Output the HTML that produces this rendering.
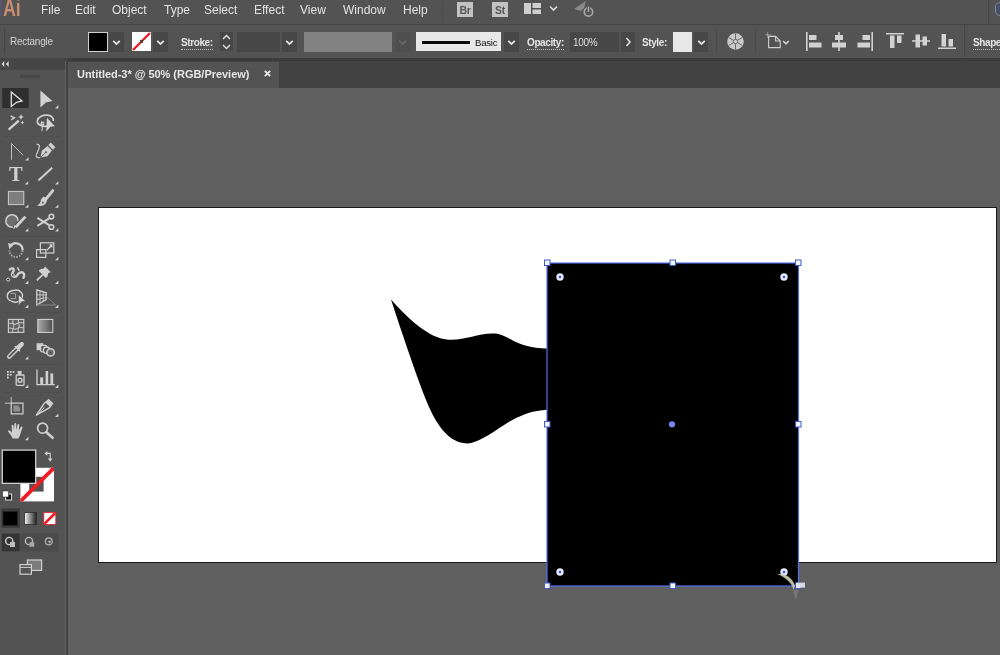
<!DOCTYPE html>
<html><head><meta charset="utf-8"><title>Adobe Illustrator</title>
<style>
html,body{margin:0;padding:0;}
body{width:1000px;height:655px;overflow:hidden;background:#5f5f5f;position:relative;font-family:"Liberation Sans",sans-serif;color:#d6d6d6;}
.abs{position:absolute;}
.gt,#menubar>div,#ctrl>div,svg{will-change:transform;}
#menubar{left:0;top:0;width:1000px;height:24px;background:#535353;}
#menubar .mi{position:absolute;top:1.5px;font-size:12px;line-height:16px;color:#e2e2e2;white-space:nowrap;}
#sep1{left:0;top:24px;width:1000px;height:1px;background:#454545;}
#ctrl{left:0;top:25px;width:1000px;height:33px;background:#535353;}
#ctrl .lbl{position:absolute;font-size:10px;line-height:12px;color:#e4e4e4;white-space:nowrap;font-weight:bold;letter-spacing:-0.4px;}
#ctrl .ul{border-bottom:1px dotted #bdbdbd;}
#ctrl .dk{position:absolute;background:#474747;}
#sep2{left:0;top:58px;width:1000px;height:3px;background:#3c3c3c;}
#tabstrip{left:67px;top:61px;width:933px;height:26.5px;background:#424242;}
#tab{left:68px;top:61.5px;width:211px;height:26px;background:#535353;}
#tabtxt{left:77px;top:67px;font-size:11px;font-weight:bold;color:#e6e6e6;white-space:nowrap;line-height:14px;letter-spacing:-0.03px;}
#tools{left:0;top:58px;width:65px;height:597px;background:#535353;}
#toolsedge{left:65.5px;top:58px;width:2px;height:597px;background:#434343;}
#toolstop{left:0;top:58px;width:65px;height:12px;background:#464646;}
#canvas{left:67px;top:87px;width:933px;height:567px;background:#5f5f5f;}
#artboard{left:98px;top:207px;width:897px;height:354px;background:#fff;border:1px solid #1a1a1a;box-sizing:content-box;}
svg{position:absolute;overflow:visible;}
</style></head><body>
<div id="canvas" class="abs"></div>
<div id="artboard" class="abs"></div>
<svg class="abs" style="left:0;top:0" width="1000" height="655" viewBox="0 0 1000 655">
<path d="M391,299.5 C410,321 430,338 447,339.5 C465,341 478,332.5 495,333.5 C509,334.5 515,348 547,348.5 L547,409.7 C520,411 502,427 491,433.5 C481,439.5 473,443.5 467,443.4 C449,443 437,425 429,407 C419,384 401,330 391,299.5 Z" fill="#000"/>
<rect x="547" y="263" width="251.5" height="323" fill="#000"/>
<rect x="547" y="263" width="251.5" height="323" fill="none" stroke="#5570f0" stroke-width="1.2"/>
<g fill="#f4f6ff" stroke="#4058c8" stroke-width="1">
<rect x="544.5" y="260" width="5.5" height="5.5"/><rect x="670" y="260" width="5.5" height="5.5"/><rect x="795.5" y="260" width="5.5" height="5.5"/>
<rect x="544.5" y="421.5" width="5.5" height="5.5"/><rect x="795.5" y="421.5" width="5.5" height="5.5"/>
<rect x="544.5" y="583" width="5.5" height="5.5"/><rect x="670" y="583" width="5.5" height="5.5"/><rect x="795.5" y="583" width="5.5" height="5.5"/>
</g>
<circle cx="672" cy="424.3" r="3.1" fill="#7486ee"/>
<g fill="#3a55cc" stroke="#e4e9ff" stroke-width="2.4">
<circle cx="560" cy="277" r="2.5"/><circle cx="784" cy="277" r="2.5"/><circle cx="560" cy="572" r="2.5"/><circle cx="784" cy="572" r="2.5"/>
</g>
<path d="M777.5,574.2 C785,573.4 792,577 795,585.6 L793.6,590 C792.4,583.5 786,577.4 777.5,574.2 Z" fill="#c6caaf" opacity="0.92"/>
<path d="M793,590 L795.6,600 L798.6,590 Z" fill="#808080" opacity="0.7"/>
<rect x="796" y="582.6" width="9" height="5" fill="#e2e2ec" opacity="0.92"/>
</svg>
<div id="menubar" class="abs">
<div class="abs" style="left:3px;top:-4.3px;font-size:24px;font-weight:bold;line-height:24px;color:#c78d72;transform:scaleX(0.74);transform-origin:0 0;">Ai</div><div class="abs" style="left:0;top:0;width:1.5px;height:16px;background:#585670"></div>
<div class="mi" style="left:40.5px">File</div>
<div class="mi" style="left:74.5px">Edit</div>
<div class="mi" style="left:112px">Object</div>
<div class="mi" style="left:164px">Type</div>
<div class="mi" style="left:204px">Select</div>
<div class="mi" style="left:253.5px">Effect</div>
<div class="mi" style="left:299.5px">View</div>
<div class="mi" style="left:343px">Window</div>
<div class="mi" style="left:402.5px">Help</div>
<div class="abs" style="left:442px;top:1px;width:1px;height:22px;background:#4b4b4b"></div>
<div class="abs" style="left:457px;top:2px;width:16px;height:15px;background:#c2c2c2;color:#585858;font-size:10.5px;font-weight:bold;line-height:16px;text-align:center;letter-spacing:-0.3px;">Br</div>
<div class="abs" style="left:492px;top:2px;width:16px;height:15px;background:#c2c2c2;color:#585858;font-size:10.5px;font-weight:bold;line-height:16px;text-align:center;letter-spacing:-0.3px;">St</div>
<svg style="left:524px;top:3px" width="17" height="11" viewBox="0 0 17 11"><g fill="#cfcfcf"><rect x="0" y="0" width="7" height="11"/><rect x="8.5" y="0" width="8.5" height="5"/><rect x="8.5" y="6.5" width="8.5" height="4.5"/></g></svg>
<svg style="left:549px;top:5px" width="9" height="7" viewBox="0 0 9 7"><path d="M1,1.5 L4.5,5 L8,1.5" fill="none" stroke="#d8d8d8" stroke-width="1.6"/></svg>
<svg style="left:573px;top:0px" width="22" height="20" viewBox="0 0 22 20"><path d="M1,9 L13,1 L11,8 L8,11 Z" fill="#8a8a8a"/><circle cx="15.5" cy="12" r="4.2" fill="none" stroke="#a8a8a8" stroke-width="1.7"/><path d="M15.5,6 V12" stroke="#535353" stroke-width="3.4"/><path d="M15.5,6.5 V12" stroke="#a8a8a8" stroke-width="1.6"/></svg>
<div class="abs" style="left:988px;top:0px;width:1px;height:24px;background:#484848"></div>
<div class="abs" style="left:995px;top:2px;width:8px;height:12px;border-radius:5px 0 0 5px;background:#44506a;border:1px solid #7b8a86;"></div>

</div>
<div id="sep1" class="abs"></div>
<div id="ctrl" class="abs">
<div class="abs" style="left:4px;top:3px;width:1px;height:26px;background:#484848"></div>
<div class="lbl" style="left:10px;top:10.5px;font-weight:normal;color:#d2d2d2;letter-spacing:-0.25px">Rectangle</div>
<div class="abs" style="left:88px;top:7px;width:17.6px;height:17.6px;background:#000;border:1.2px solid #d0d0d0;box-sizing:content-box"></div>
<div class="dk" style="left:109px;top:7px;width:15px;height:20px"></div>
<svg style="left:112px;top:14px" width="9" height="7" viewBox="0 0 9 7"><path d="M1.2,1.8 L4.5,4.9 L7.8,1.8" fill="none" stroke="#e0e0e0" stroke-width="1.8"/></svg>
<div class="abs" style="left:132px;top:7px;width:19px;height:19px;background:#fff;"></div>
<svg style="left:132px;top:7px" width="19" height="19" viewBox="0 0 19 19"><path d="M1,18 L18,1" stroke="#ee1218" stroke-width="2.1"/><rect x="8" y="8" width="3" height="3" fill="#4a4a32"/></svg>
<div class="dk" style="left:153px;top:7px;width:15px;height:20px"></div>
<svg style="left:156px;top:14px" width="9" height="7" viewBox="0 0 9 7"><path d="M1.2,1.8 L4.5,4.9 L7.8,1.8" fill="none" stroke="#e0e0e0" stroke-width="1.8"/></svg>
<div class="lbl ul" style="left:181px;top:12px;">Stroke:</div>
<div class="dk" style="left:220px;top:7px;width:13px;height:19px"></div>
<svg style="left:222px;top:9px" width="9" height="16" viewBox="0 0 9 16"><path d="M1,5 L4.5,1.5 L8,5 M1,11 L4.5,14.5 L8,11" fill="none" stroke="#dcdcdc" stroke-width="1.5"/></svg>
<div class="dk" style="left:237px;top:7px;width:43px;height:20px"></div>
<div class="dk" style="left:282px;top:7px;width:15px;height:20px"></div>
<svg style="left:285px;top:14px" width="9" height="7" viewBox="0 0 9 7"><path d="M1.2,1.8 L4.5,4.9 L7.8,1.8" fill="none" stroke="#e0e0e0" stroke-width="1.8"/></svg>
<div class="abs" style="left:303.6px;top:6.8px;width:88.4px;height:20.2px;background:#818181"></div>
<div class="abs" style="left:395px;top:7px;width:15px;height:20px;background:#4f4f4f"></div>
<svg style="left:398px;top:14px" width="9" height="7" viewBox="0 0 9 7"><path d="M1,1.5 L4.5,5 L8,1.5" fill="none" stroke="#6a6a6a" stroke-width="1.6"/></svg>
<div class="abs" style="left:416.3px;top:6.8px;width:85.2px;height:19.4px;background:#e8e8e8"></div>
<div class="abs" style="left:422px;top:16px;width:48px;height:2.5px;background:#0a0a0a"></div>
<div class="abs" style="left:474.7px;top:12.3px;font-size:9.6px;line-height:12px;color:#111;letter-spacing:-0.25px">Basic</div>
<div class="dk" style="left:504px;top:7px;width:15px;height:20px"></div>
<svg style="left:507px;top:14px" width="9" height="7" viewBox="0 0 9 7"><path d="M1.2,1.8 L4.5,4.9 L7.8,1.8" fill="none" stroke="#e0e0e0" stroke-width="1.8"/></svg>
<div class="lbl ul" style="left:527px;top:12px;">Opacity:</div>
<div class="dk" style="left:569.5px;top:7px;width:48.5px;height:20px"></div>
<div class="abs" style="left:573px;top:11.5px;font-size:10px;line-height:12px;color:#dcdcdc;letter-spacing:-0.3px">100%</div>
<div class="dk" style="left:621px;top:7px;width:14px;height:20px"></div>
<svg style="left:625px;top:12px" width="7" height="10" viewBox="0 0 7 10"><path d="M1.5,1 L5,5 L1.5,9" fill="none" stroke="#e0e0e0" stroke-width="1.6"/></svg>
<div class="lbl" style="left:642px;top:12px;">Style:</div>
<div class="abs" style="left:673px;top:7px;width:19px;height:19.5px;background:#e8e8e8"></div>
<div class="dk" style="left:694px;top:7px;width:14px;height:20px"></div>
<svg style="left:696.5px;top:14px" width="9" height="7" viewBox="0 0 9 7"><path d="M1.2,1.8 L4.5,4.9 L7.8,1.8" fill="none" stroke="#e0e0e0" stroke-width="1.8"/></svg>
<div class="abs" style="left:716px;top:4px;width:1px;height:25px;background:#4a4a4a"></div>
<div class="abs" style="left:755px;top:4px;width:1px;height:25px;background:#4a4a4a"></div>
<div class="abs" style="left:964px;top:0px;width:1px;height:32px;background:#484848"></div>
<div class="lbl ul" style="left:973px;top:12px;">Shape:</div>

<svg style="left:726px;top:7px" width="19" height="19" viewBox="0 0 19 19"><circle cx="9.5" cy="9.5" r="8.3" fill="#c9c9c9"/><g stroke="#6a6a6a" stroke-width="1" fill="none"><circle cx="9.5" cy="9.5" r="2.2"/><path d="M9.5,1.5 V7.3 M9.5,11.7 V17.5 M2.6,5.5 L7.6,8.4 M11.4,10.6 L16.4,13.5 M2.6,13.5 L7.6,10.6 M11.4,8.4 L16.4,5.5"/></g></svg>
<svg style="left:765px;top:6px" width="26" height="22" viewBox="0 0 26 22"><g fill="none" stroke="#cfcfcf" stroke-width="1.1"><path d="M3.6,5.4 H10.6 L15.2,10 V16.6 H3.6 Z"/><path d="M10.6,5.4 V10 H15.2"/></g><path d="M0.6,3.8 H5.6 M2.6,1.6 V6.4" stroke="#cfcfcf" stroke-width="1" stroke-dasharray="1 1"/><path d="M18.2,10 L21,12.8 L23.8,10" fill="none" stroke="#d8d8d8" stroke-width="1.5"/></svg>
<svg style="left:806px;top:7px" width="16" height="19" viewBox="0 0 16 19"><g fill="#d2d2d2"><rect x="0" y="0" width="1.6" height="19"/><rect x="3" y="3" width="7.5" height="5"/><rect x="3" y="10.5" width="12.5" height="5"/></g></svg>
<svg style="left:831px;top:7px" width="16" height="19" viewBox="0 0 16 19"><g fill="#d2d2d2"><rect x="7.2" y="0" width="1.6" height="19"/><rect x="4" y="3" width="8" height="5"/><rect x="1" y="10.5" width="14" height="5"/></g></svg>
<svg style="left:857px;top:7px" width="16" height="19" viewBox="0 0 16 19"><g fill="#d2d2d2"><rect x="14.4" y="0" width="1.6" height="19"/><rect x="5.5" y="3" width="7.5" height="5"/><rect x="0.5" y="10.5" width="12.5" height="5"/></g></svg>
<svg style="left:886px;top:8px" width="18" height="16" viewBox="0 0 18 16"><g fill="#d2d2d2"><rect x="0" y="0" width="18" height="1.5"/><rect x="4" y="2.5" width="4.5" height="12.5"/><rect x="11" y="2.5" width="4.5" height="7.5"/></g></svg>
<svg style="left:912px;top:8px" width="18" height="16" viewBox="0 0 18 16"><g fill="#d2d2d2"><rect x="0" y="7.2" width="18" height="1.5"/><rect x="3.5" y="1.5" width="4.5" height="13"/><rect x="10.5" y="3.5" width="4.5" height="9"/></g></svg>
<svg style="left:938px;top:8px" width="18" height="16" viewBox="0 0 18 16"><g fill="#d2d2d2"><rect x="0" y="14.5" width="18" height="1.5"/><rect x="3.5" y="1" width="4.5" height="12.5"/><rect x="10.5" y="6" width="4.5" height="7.5"/></g></svg>

</div>
<div id="sep2" class="abs"></div>
<div id="tabstrip" class="abs"></div>
<div id="tab" class="abs"></div>
<div id="tabtxt" class="abs gt">Untitled-3* @ 50% (RGB/Preview)</div>
<svg class="abs" style="left:264.3px;top:69.5px" width="7" height="7" viewBox="0 0 7 7"><path d="M0.8,0.8 L6.2,6.2 M6.2,0.8 L0.8,6.2" stroke="#ececec" stroke-width="1.8"/></svg>
<div id="tools" class="abs"></div>
<div id="toolstop" class="abs"></div>
<div id="toolsedge" class="abs"></div>
<svg class="abs" style="left:0;top:0" width="70" height="655" viewBox="0 0 70 655">
<!-- top collapse arrows & grip -->
<path d="M4.2,61 L1.5,64 L4.2,67 Z M8.6,61 L5.9,64 L8.6,67 Z" fill="#d8d8d8"/>
<rect x="20" y="74.5" width="20" height="3.5" fill="#484848"/>
<!-- group separators -->
<g fill="#4e4e4e"><rect x="3" y="136" width="58" height="1"/><rect x="3" y="236" width="58" height="1"/><rect x="3" y="312" width="58" height="1"/><rect x="3" y="364" width="58" height="1"/><rect x="3" y="392" width="58" height="1"/></g>
<!-- row1 -->
<rect x="2.2" y="88" width="26.5" height="20" rx="1" fill="#2f2f2f"/>
<path d="M11.3,92 L22,101 L16.6,102.3 L11.3,106.4 Z" fill="none" stroke="#e0e0e0" stroke-width="1.3" stroke-linejoin="miter"/>
<path d="M40.4,90.4 L52.4,101 L45.9,102.6 L40.4,107.6 Z" fill="#d0d0d0"/>
<path d="M58.4,105.0 V108.4 H55.0 Z" fill="#cfcfcf"/>
<!-- row2 magic wand -->
<path d="M8.6,129.6 L18.8,120.6" stroke="#d0d0d0" stroke-width="2.3" stroke-linecap="butt"/>
<path d="M21,114.3 L22,116.2 L23.9,117 L22,117.8 L21,119.7 L20,117.8 L18.1,117 L20,116.2 Z" fill="#d0d0d0"/>
<path d="M22.4,120.6 L23,122 L24.4,122.6 L23,123.2 L22.4,124.6 L21.8,123.2 L20.4,122.6 L21.8,122 Z" fill="#d0d0d0"/>
<path d="M10.6,115.8 L14.4,117.8 L11.2,120" fill="none" stroke="#d0d0d0" stroke-width="1.5"/>
<!-- lasso -->
<path d="M47,126.2 C40,126.8 36.8,123.5 37.4,120.6 C38.2,116.6 43.5,115 47,115.2 C51.5,115.4 54,118 53.2,121" fill="none" stroke="#d0d0d0" stroke-width="1.7"/>
<path d="M41.5,122.2 C43.8,121.6 44.6,124 43,125 C41.6,125.8 40.4,124.6 41.5,122.2 C42.6,126 42.6,129 41.8,131" fill="none" stroke="#d0d0d0" stroke-width="1.1"/>
<path d="M46.9,117.8 L55,126.2 L50.3,126.8 L46.3,131.4 Z" fill="#d6d6d6"/>
<!-- row3 thin anchor outline -->
<path d="M11.5,159.8 V143.6 L23,155.2" fill="none" stroke="#bdbdbd" stroke-width="1"/>
<path d="M28.6,157.2 V160.6 H25.200000000000003 Z" fill="#cfcfcf"/>
<!-- curvature pen -->
<path d="M36.6,144.3 C39.4,144 39.8,146 39,148.4 C38,151.6 36,154 36.2,156 C36.4,157.6 38.4,157.8 40,157.6" fill="none" stroke="#d0d0d0" stroke-width="1.2"/>
<path d="M40.6,157.6 L41.8,150.8 L47.6,146 L52,150.6 L47.4,156.2 Z" fill="#d0d0d0"/>
<path d="M48.4,145 L50.8,142.4 L55.4,147.2 L53,149.8 Z" fill="#d0d0d0"/>
<path d="M41,157 L45.6,152.6" stroke="#535353" stroke-width="0.9"/>
<circle cx="46" cy="152.2" r="1" fill="#535353"/>
<!-- row4 T and line -->
<text x="9" y="181.4" font-family="Liberation Serif, serif" font-weight="bold" font-size="20.5" fill="#d0d0d0">T</text>
<path d="M28.2,181.2 V184.6 H24.8 Z" fill="#cfcfcf"/>
<path d="M38.4,180.6 L52.2,167.8" stroke="#d0d0d0" stroke-width="2"/>
<path d="M58.4,181.2 V184.6 H55.0 Z" fill="#cfcfcf"/>
<!-- row5 rectangle & brush -->
<rect x="8.4" y="191.4" width="15.4" height="13.2" fill="#7f7f7f" stroke="#cdcdcd" stroke-width="1"/>
<path d="M28.4,204.4 V207.8 H25.0 Z" fill="#cfcfcf"/>
<path d="M52.8,190.6 L46,199" stroke="#d0d0d0" stroke-width="2.8" stroke-linecap="round"/>
<path d="M46.6,198.2 L43.6,196.6 C41.6,198.4 40.8,200 40.6,201.6 C40.2,203.6 38.6,204.8 36.8,205.6 C40.6,206.6 44.6,205.8 46,203 C46.8,201.4 47.2,199.8 46.6,198.2 Z" fill="#d0d0d0"/>
<circle cx="42.8" cy="202.6" r="1.1" fill="#6a6a6a"/>
<path d="M58.4,204.4 V207.8 H55.0 Z" fill="#cfcfcf"/>
<!-- row6 shaper & scissors -->
<circle cx="12" cy="221" r="6.2" fill="#6e6e6e" stroke="#d0d0d0" stroke-width="1.5"/>
<path d="M25.6,216.4 L14.2,228.8" stroke="#535353" stroke-width="5"/>
<path d="M25.4,216.6 L15.6,227.2" stroke="#d0d0d0" stroke-width="2.8"/>
<path d="M16.4,226.2 L13.2,229.8 L14.4,225" fill="#d0d0d0"/>
<path d="M28.4,228.2 V231.6 H25.0 Z" fill="#cfcfcf"/>
<path d="M37.4,217.8 L49.2,225.2 M37.4,225.8 L49.2,218.4" stroke="#d0d0d0" stroke-width="2"/>
<circle cx="51.4" cy="216.6" r="2.3" fill="none" stroke="#d0d0d0" stroke-width="1.6"/>
<circle cx="51.4" cy="227" r="2.3" fill="none" stroke="#d0d0d0" stroke-width="1.6"/>
<path d="M58.4,228.2 V231.6 H55.0 Z" fill="#cfcfcf"/>
<!-- row7 rotate & scale -->
<path d="M10.2,246.6 A6.6,6.6 0 0 1 22.5,250.4" fill="none" stroke="#d0d0d0" stroke-width="2.2"/>
<path d="M22.5,250.4 A6.6,6.6 0 1 1 9.3,250.4" fill="none" stroke="#a8a8a8" stroke-width="1.8" stroke-dasharray="1.6 1.2"/>
<path d="M8,243 L13.6,244.4 L9.4,249.2 Z" fill="#d0d0d0"/>
<path d="M28.4,256.8 V260.2 H25.0 Z" fill="#cfcfcf"/>
<rect x="40.4" y="242.8" width="13.4" height="10.2" fill="none" stroke="#d0d0d0" stroke-width="1.2"/>
<rect x="36.6" y="249.6" width="9.2" height="7.8" fill="none" stroke="#d0d0d0" stroke-width="1.2"/>
<path d="M47,250.2 L51.4,245.6" stroke="#d0d0d0" stroke-width="1.4"/>
<path d="M52.6,244.2 L52.2,248 L48.8,244.6 Z" fill="#d0d0d0"/>
<path d="M58.4,256.8 V260.2 H55.0 Z" fill="#cfcfcf"/>
<!-- row8 width-ish & pin -->
<path d="M9.8,269.6 C11.6,267.4 14.2,268.4 13.6,270.8 C13,272.6 11.2,273.6 12.2,275.4 C13.4,277.6 16.4,277.2 17.4,275 C18.4,272.8 21,271.6 23,272.8 C24.6,274 24.4,276.4 23.4,277.8" fill="none" stroke="#d0d0d0" stroke-width="2.4" stroke-linecap="round"/>
<path d="M17.4,267.4 L19.2,270.6" stroke="#d0d0d0" stroke-width="1.6"/>
<circle cx="12.8" cy="275" r="1.5" fill="#535353" stroke="#d0d0d0" stroke-width="1"/>
<circle cx="8.2" cy="279.6" r="1.5" fill="#2c2c2c" stroke="#e4e4e4" stroke-width="1"/>
<path d="M28.4,280.6 V284 H25.0 Z" fill="#cfcfcf"/>
<path d="M45,266.4 L50.8,272.2 L48.4,273 L47.4,276.4 L45.8,278 L38.6,270.8 L40.2,269.2 L43.8,268.4 Z" fill="#d0d0d0"/>
<path d="M42.6,274.8 L36.8,280.4" stroke="#d0d0d0" stroke-width="1.7"/>
<path d="M58.4,280.6 V284 H55.0 Z" fill="#cfcfcf"/>
<!-- row9 shape builder & perspective -->
<path d="M13,290.6 C16,289.6 19.4,290.4 20.8,292 C23,293.6 23,297 21,299 C19.6,302 15,303 12,301.4 C8.4,300.4 6.8,297.6 7.4,295 C8,292.4 10.4,291 13,290.6 Z" fill="none" stroke="#d0d0d0" stroke-width="1.5"/>
<path d="M10.6,293.4 H15.6 V298.6 H10.6" fill="none" stroke="#a5a5a5" stroke-width="1"/>
<path d="M18.4,294.6 L25.6,301.2 L21.6,301.8 L18.8,305.6 Z" fill="#d8d8d8" stroke="#535353" stroke-width="0.6"/>
<path d="M28.4,304.6 V308 H25.0 Z" fill="#cfcfcf"/>
<path d="M36.8,289.8 V305 L46.2,299.6 V292.8 Z" fill="none" stroke="#d0d0d0" stroke-width="1.3"/>
<path d="M40,290.8 V303.2 M43.2,291.8 V301.4 M36.8,294.8 L46.2,295 M36.8,299.6 L46.2,297.4" stroke="#d0d0d0" stroke-width="0.9"/>
<path d="M36.8,305 H55.6 L46.2,296.4" fill="none" stroke="#8a8a8a" stroke-width="0.9"/>
<path d="M58.4,304.6 V308 H55.0 Z" fill="#cfcfcf"/>
<!-- row10 mesh & gradient -->
<rect x="8.4" y="319.4" width="15.4" height="13" fill="#606060" stroke="#d0d0d0" stroke-width="1.1"/>
<path d="M8.4,324 C12,321.6 14,326 17,323.6 C19.6,321.6 21.6,323.6 23.8,322.4 M8.4,328.6 C11.6,326.6 14,331 17.4,328.4 C20,326.4 22,328.4 23.8,327.6 M13.4,319.4 C11.6,323 15.2,325.6 13,328.6 C12.2,330 12.6,331.4 13,332.4 M18.8,319.4 C17,322.4 20.6,325.4 18.6,328.4 C17.6,330 18.2,331.4 18.6,332.4" fill="none" stroke="#d0d0d0" stroke-width="1"/>
<defs><linearGradient id="gr1" x1="0" y1="0" x2="1" y2="0"><stop offset="0" stop-color="#aaaaaa"/><stop offset="1" stop-color="#4e4e4e"/></linearGradient>
<linearGradient id="gr2" x1="0" y1="0" x2="1" y2="0"><stop offset="0" stop-color="#f4f4f4"/><stop offset="1" stop-color="#1c1c1c"/></linearGradient></defs>
<rect x="37.8" y="319.4" width="15" height="13" fill="url(#gr1)" stroke="#d0d0d0" stroke-width="1.1"/>
<!-- row11 eyedropper & blend -->
<path d="M18.2,347.6 L9.2,356.6" stroke="#d0d0d0" stroke-width="4.4" stroke-linecap="round"/>
<path d="M18.6,347.2 L9.4,356.4" stroke="#535353" stroke-width="1.8" stroke-linecap="round"/>
<path d="M16.2,346.6 L19.2,343.6 C20.4,341.8 22.6,341.6 23.4,342.6 C24.4,343.6 24,345.6 22.4,346.8 L19.6,349.8 L20.4,350.8 L19.4,351.8 L14.4,346.8 L15.4,345.8 Z" fill="#d0d0d0"/>
<path d="M28.4,356.20000000000005 V359.6 H25.0 Z" fill="#cfcfcf"/>
<rect x="36.6" y="343.2" width="6.6" height="7" fill="#d0d0d0"/>
<rect x="40.6" y="345.4" width="6" height="6.4" rx="1.6" fill="#535353" stroke="#d0d0d0" stroke-width="1.3"/>
<circle cx="46.6" cy="350.2" r="3.2" fill="#535353" stroke="#d0d0d0" stroke-width="1.3"/>
<circle cx="50.6" cy="352.4" r="3.7" fill="#6c6c6c" stroke="#d0d0d0" stroke-width="1.5"/>
<circle cx="50.6" cy="352.4" r="0.9" fill="#444"/>
<!-- row12 symbol sprayer & graph -->
<g fill="#d0d0d0"><rect x="7" y="371" width="1.8" height="1.8"/><rect x="9.8" y="371" width="1.8" height="1.8"/><rect x="12.6" y="371" width="1.8" height="1.8"/><rect x="7" y="373.8" width="1.8" height="1.8"/><rect x="9.8" y="373.8" width="1.8" height="1.8"/><rect x="7" y="376.6" width="1.8" height="1.8"/></g>
<rect x="16.2" y="375" width="7.8" height="10.4" rx="0.8" fill="none" stroke="#d0d0d0" stroke-width="1.3"/>
<rect x="17.6" y="371" width="4" height="2.6" fill="#d0d0d0"/><rect x="18.6" y="373" width="2.4" height="2.2" fill="#d0d0d0"/>
<circle cx="20" cy="380.2" r="2" fill="none" stroke="#d0d0d0" stroke-width="1.4"/>
<path d="M28.4,384.6 V388 H25.0 Z" fill="#cfcfcf"/>
<path d="M37,369.4 V384.6 H54.8" fill="none" stroke="#d0d0d0" stroke-width="1.3"/>
<rect x="40.2" y="377.4" width="3" height="6.6" fill="#d0d0d0"/><rect x="45.6" y="371" width="2.6" height="13" fill="#d0d0d0"/><rect x="50.4" y="373.4" width="2.8" height="10.6" fill="#d0d0d0"/>
<path d="M58.4,384.6 V388 H55.0 Z" fill="#cfcfcf"/>
<!-- row13 artboard & slice -->
<path d="M11.2,397 V403.2 M4.8,403.2 H11.2" fill="none" stroke="#c0c0c0" stroke-width="1"/><path d="M11.2,403.2 V413.8 H23 V403.2 Z" fill="none" stroke="#d0d0d0" stroke-width="1.2"/>
<path d="M13.4,405.4 H18 L20,407.4 V411.4 H13.4 Z" fill="#8e8e8e"/>
<path d="M36.4,415.2 L44.4,403.2 L48.6,399.8 L52.6,403.4 L49.6,407.6 Z" fill="none" stroke="#d0d0d0" stroke-width="1.4" stroke-linejoin="round"/>
<path d="M48.2,400.2 L52.4,403.8 L50,407 L45.4,402.6 Z" fill="#d0d0d0"/>
<path d="M37,414.6 L44.4,407.4" stroke="#d0d0d0" stroke-width="1"/>
<path d="M58.4,413.6 V417 H55.0 Z" fill="#cfcfcf"/>
<!-- row14 hand & zoom -->
<path d="M12.6,438.4 C11.6,436 9.6,433.4 8,431.6 C7.6,430.4 9,430 10,430.8 L12,432.8 L11.6,425.6 C11.6,424.4 13.2,424.4 13.4,425.6 L14,430 L14.4,423.8 C14.6,422.6 16.2,422.6 16.2,423.8 L16.4,430 L17.6,424.6 C17.9,423.4 19.4,423.8 19.3,425 L18.8,430.6 L20.8,427 C21.4,426 22.8,426.6 22.4,427.8 L20.2,434.6 C19.8,436.2 19,437.4 18.4,438.4 Z" fill="#d0d0d0"/>
<path d="M28.4,436.8 V440.2 H25.0 Z" fill="#cfcfcf"/>
<circle cx="42.6" cy="428.2" r="5" fill="none" stroke="#d0d0d0" stroke-width="1.7"/>
<path d="M46.4,432.2 L52.6,437.8" stroke="#d0d0d0" stroke-width="2.6" stroke-linecap="round"/>
<!-- fill / stroke -->
<rect x="20.4" y="467.8" width="33.6" height="33.6" fill="#fff"/>
<rect x="29.2" y="476.8" width="14.4" height="14.8" fill="#535353"/>
<path d="M20.4,501.4 L20.4,498.8 L51.4,467.8 L54,467.8 L54,470.4 L23,501.4 Z" fill="#ee1c24"/>
<rect x="2.3" y="450.1" width="33.4" height="33.2" fill="#000" stroke="#dcdcdc" stroke-width="1.2"/>
<path d="M46.4,453.4 H50.2 V459.4" fill="none" stroke="#d0d0d0" stroke-width="1.2"/>
<path d="M44.4,453.4 L47.4,451 V455.8 Z M50.2,461.8 L47.8,458.6 H52.6 Z" fill="#d0d0d0"/>
<rect x="5.6" y="494" width="6" height="6" fill="#111" stroke="#e0e0e0" stroke-width="1"/>
<rect x="2.6" y="491" width="6" height="6" fill="#fff" stroke="#333" stroke-width="0.6"/>
<!-- color mode buttons -->
<rect x="1.4" y="508.4" width="18.6" height="19.4" fill="#3a3a3a"/>
<rect x="3" y="511.4" width="14.4" height="14" fill="#000" stroke="#2a2a2a" stroke-width="0.6"/>
<rect x="24.6" y="512.4" width="12" height="12" fill="url(#gr2)" stroke="#2e2e2e" stroke-width="0.8"/>
<rect x="43.8" y="512.4" width="12" height="12" fill="#fff" stroke="#ee1c24" stroke-width="0.8"/>
<path d="M44.4,523.8 L55.2,513" stroke="#ee1c24" stroke-width="2.6"/>
<!-- draw modes -->
<rect x="1.6" y="533.4" width="57" height="18" fill="#4b4b4b"/>
<rect x="1.8" y="533.6" width="17.8" height="17.6" fill="#353535"/>
<circle cx="9.2" cy="541" r="3.6" fill="none" stroke="#d0d0d0" stroke-width="1.4"/><rect x="10" y="542" width="5" height="5" fill="#bdbdbd"/>
<circle cx="29" cy="541" r="3.6" fill="none" stroke="#b8b8b8" stroke-width="1.4"/><rect x="29.6" y="542.2" width="4.6" height="4.6" fill="#a8a8a8"/>
<circle cx="48.8" cy="541.4" r="3.4" fill="none" stroke="#a8a8a8" stroke-width="1.4"/><circle cx="49.6" cy="541.8" r="1.4" fill="#a8a8a8"/>
<!-- screen mode -->
<rect x="27.4" y="560" width="14.2" height="10.4" fill="#7a7a7a" stroke="#d0d0d0" stroke-width="1.2"/>
<rect x="20" y="564.6" width="11.4" height="9.6" fill="#535353" stroke="#d0d0d0" stroke-width="1.2"/>
<path d="M20,567.4 H31.4" stroke="#d0d0d0" stroke-width="1"/>
</svg>
</body></html>
